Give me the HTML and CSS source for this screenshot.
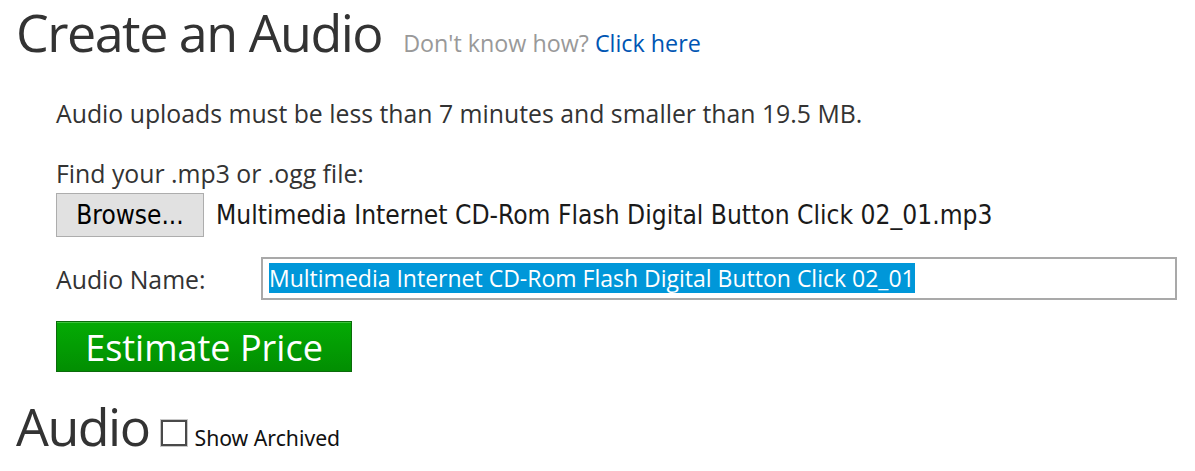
FILE: index.html
```html
<!DOCTYPE html>
<html lang="en">
<head>
<meta charset="utf-8">
<title>Create an Audio</title>
<link rel="stylesheet" href="styles.css">
</head>
<body>
<div class="page">
  <div class="title-row">
    <h1 class="title">Create an Audio</h1>
    <span class="help">Don't know how? <a class="help-link" href="#">Click here</a></span>
  </div>
  <div class="content">
    <p class="limits">Audio uploads must be less than 7 minutes and smaller than 19.5 MB.</p>
    <p class="find">Find your .mp3 or .ogg file:</p>
    <div class="file-row">
      <div class="browse">Browse...</div>
      <span class="file-name">Multimedia Internet CD-Rom Flash Digital Button Click 02_01.mp3</span>
    </div>
    <div class="name-row">
      <span class="name-label">Audio Name:</span>
      <div class="name-input"><span class="selected">Multimedia Internet CD-Rom Flash Digital Button Click 02_01</span></div>
    </div>
    <div class="estimate">Estimate Price</div>
  </div>
  <div class="audio-row">
    <h2 class="audio-title">Audio</h2>
    <span class="checkbox"></span>
    <span class="archived">Show Archived</span>
  </div>
</div>
</body>
</html>
```

FILE: styles.css
```css
html, body {
  margin: 0;
  padding: 0;
  background: #ffffff;
}
body {
  font-family: "Open Sans", "Noto Sans", sans-serif;
  color: #333333;
}
.page {
  padding: 0 0 0 16px;
}
.title-row {
  display: flex;
  align-items: baseline;
  gap: 21px;
}
.title {
  margin: 0;
  font-size: 52px;
  font-weight: 400;
  line-height: 64px;
  letter-spacing: -1.5px;
  color: #333333;
}
.help {
  font-size: 23.3px;
  color: #999999;
}
.help-link {
  color: #0055b3;
  text-decoration: none;
}
.content {
  padding-left: 40px;
  display: flex;
  flex-direction: column;
  align-items: flex-start;
}
.limits,
.find {
  margin: 0;
  font-size: 24.8px;
  line-height: 30px;
}
.limits {
  margin-top: 34px;
}
.find {
  margin-top: 30px;
}
.file-row {
  margin-top: 5px;
  display: flex;
  align-items: center;
  gap: 12px;
  font-family: "DejaVu Sans Condensed", "DejaVu Sans", sans-serif;
  font-stretch: condensed;
  font-size: 26px;
  color: #1a1a1a;
}
.file-name {
  font-size: 26.15px;
}
.browse {
  box-sizing: border-box;
  width: 148px;
  height: 44px;
  border: 1px solid #adadad;
  background: #e1e1e1;
  color: #000000;
  display: flex;
  align-items: center;
  justify-content: center;
}
.name-row {
  margin-top: 20px;
  display: flex;
  align-items: center;
  align-self: stretch;
}
.name-label {
  width: 205px;
  font-size: 24.8px;
  line-height: 30px;
}
.name-input {
  box-sizing: border-box;
  width: 916px;
  height: 43px;
  border: 2px solid #a9a9a9;
  padding: 4px 6px 5px 6px;
  font-size: 23px;
  line-height: 30px;
  white-space: nowrap;
}
.selected {
  background: #0097d9;
  color: #ffffff;
  display: inline-block;
  line-height: 30px;
}
.estimate {
  margin-top: 21px;
  box-sizing: border-box;
  width: 296px;
  height: 51px;
  padding-top: 2px;
  border: 1px solid #0b6b0b;
  box-shadow: inset 0 1px 0 #3cc23c;
  background: linear-gradient(#04ab04, #028e02);
  color: #ffffff;
  font-size: 36px;
  line-height: 47px;
  text-align: center;
}
.audio-row {
  margin-top: 22px;
  display: flex;
  align-items: baseline;
}
.audio-title {
  margin: 0;
  font-size: 52px;
  font-weight: 400;
  line-height: 64px;
  letter-spacing: -1.5px;
  color: #333333;
}
.checkbox {
  box-sizing: border-box;
  width: 26px;
  height: 26px;
  margin-left: 11px;
  margin-bottom: -3px;
  border: 2px solid #4a4a4a;
  box-shadow: 0 0 0 1px #c8c8c8;
  background: #ffffff;
}
.archived {
  margin-left: 8px;
  font-family: "Noto Sans", "Open Sans", sans-serif;
  font-size: 21.2px;
  color: #111111;
}
```
